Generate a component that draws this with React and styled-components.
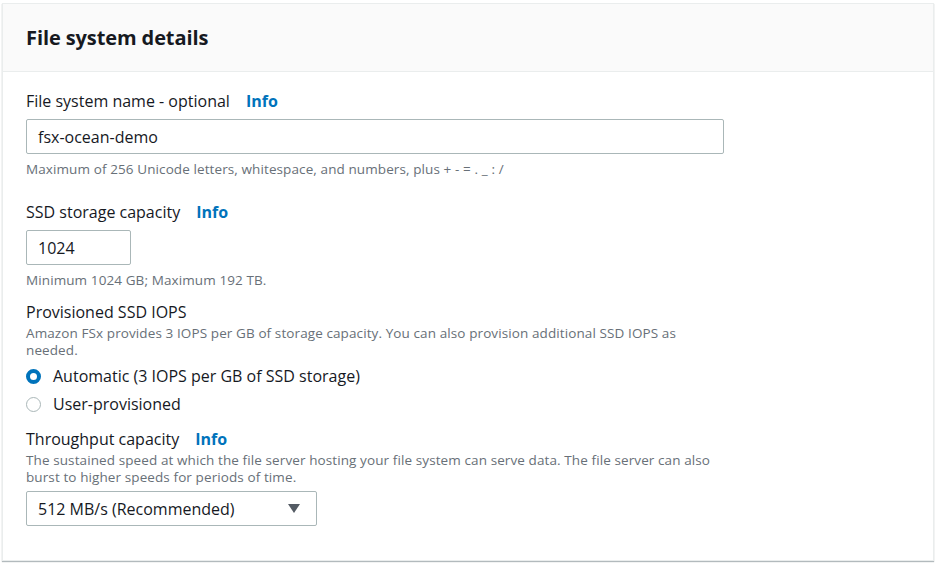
import React from 'react';
import styled, { createGlobalStyle } from 'styled-components';

const color = {
	text: '#16191f',
	hint: '#687078',
	link: '#0073bb',
	border: '#aab7b8',
	divider: '#eaeded',
	header: '#fafafa',
};

const Global = createGlobalStyle`
	body {
		margin: 0;
		background: #ffffff;
		font-family: "Open Sans", "Noto Sans", Arial, sans-serif;
		color: ${color.text};
	}
`;

const C = {
	page: styled.div`
		padding: 3px 2px 2px 2px;
		width: 936px;
		height: 564px;
		box-sizing: border-box;
	`,
	panel: styled.section`
		border: 1px solid ${color.divider};
		box-shadow: 0 1px 1px 0 rgba(0, 28, 36, 0.3);
		background: #ffffff;
		height: 558px;
		box-sizing: border-box;
	`,
	header: styled.header`
		background: ${color.header};
		border-bottom: 1px solid ${color.divider};
		height: 68px;
		box-sizing: border-box;
		display: flex;
		align-items: center;
		padding: 0 23px;
	`,
	title: styled.h2`
		margin: 0;
		font-size: 20px;
		font-weight: 700;
		letter-spacing: -0.1px;
	`,
	body: styled.div`
		padding: 18px 23px 0 23px;
		display: flex;
		flex-direction: column;
	`,
	field: styled.div`
		display: flex;
		flex-direction: column;
		margin-bottom: ${(p) => p.gap || 0}px;
	`,
	labelRow: styled.div`
		display: flex;
		align-items: center;
		gap: 16px;
		height: 22px;
	`,
	label: styled.span`
		font-size: 16px;
		line-height: 22px;
	`,
	info: styled.a`
		color: ${color.link};
		font-weight: 700;
		font-size: 16px;
		text-decoration: none;
	`,
	description: styled.p`
		margin: 2px 0 0 0;
		font-size: 13.5px;
		line-height: 17px;
		letter-spacing: 0.1px;
		color: ${color.hint};
		max-width: 690px;
	`,
	input: styled.div`
		margin-top: 7px;
		width: ${(p) => p.width}px;
		height: 35px;
		box-sizing: border-box;
		border: 1px solid ${color.border};
		border-radius: 2px;
		display: flex;
		align-items: center;
		padding: 0 11px;
		font-size: 16px;
	`,
	hint: styled.p`
		margin: 7px 0 0 0;
		font-size: 13.5px;
		line-height: 17px;
		color: ${color.hint};
		letter-spacing: 0.1px;
	`,
	radios: styled.div`
		display: flex;
		flex-direction: column;
		gap: 7px;
		margin-top: 7px;
	`,
	radio: styled.label`
		display: flex;
		align-items: center;
		gap: 12px;
		font-size: 16px;
		line-height: 21px;
	`,
	dot: styled.span`
		width: 15px;
		height: 15px;
		border-radius: 50%;
		box-sizing: border-box;
		border: ${(p) => (p.checked ? `4px solid ${color.link}` : `1.5px solid ${color.border}`)};
		background: #ffffff;
	`,
	select: styled.div`
		margin-top: 5px;
		width: 291px;
		height: 35px;
		box-sizing: border-box;
		border: 1px solid ${color.border};
		border-radius: 2px;
		display: flex;
		align-items: center;
		justify-content: space-between;
		padding: 0 16px 0 11px;
		font-size: 16px;
	`,
	caret: styled.span`
		width: 0;
		height: 0;
		border-left: 6px solid transparent;
		border-right: 6px solid transparent;
		border-top: 9px solid #545b64;
	`,
};

function Label({ children, info }) {
	return (
		<C.labelRow>
			<C.label>{children}</C.label>
			{info && <C.info href="#">Info</C.info>}
		</C.labelRow>
	);
}

export default function App() {
	return (
		<C.page>
			<Global />
			<C.panel>
				<C.header>
					<C.title>File system details</C.title>
				</C.header>
				<C.body>
					<C.field gap={23}>
						<Label info>File system name - optional</Label>
						<C.input width={698}>fsx-ocean-demo</C.input>
						<C.hint>Maximum of 256 Unicode letters, whitespace, and numbers, plus + - = . _ : /</C.hint>
					</C.field>
					<C.field gap={12}>
						<Label info>SSD storage capacity</Label>
						<C.input width={105}>1024</C.input>
						<C.hint>Minimum 1024 GB; Maximum 192 TB.</C.hint>
					</C.field>
					<C.field gap={13}>
						<Label>Provisioned SSD IOPS</Label>
						<C.description>
							Amazon FSx provides 3 IOPS per GB of storage capacity. You can also provision additional SSD IOPS as
							needed.
						</C.description>
						<C.radios>
							<C.radio>
								<C.dot checked />
								Automatic (3 IOPS per GB of SSD storage)
							</C.radio>
							<C.radio>
								<C.dot />
								User-provisioned
							</C.radio>
						</C.radios>
					</C.field>
					<C.field>
						<Label info>Throughput capacity</Label>
						<C.description>
							The sustained speed at which the file server hosting your file system can serve data. The file server can also
							burst to higher speeds for periods of time.
						</C.description>
						<C.select>
							512 MB/s (Recommended)
							<C.caret />
						</C.select>
					</C.field>
				</C.body>
			</C.panel>
		</C.page>
	);
}
